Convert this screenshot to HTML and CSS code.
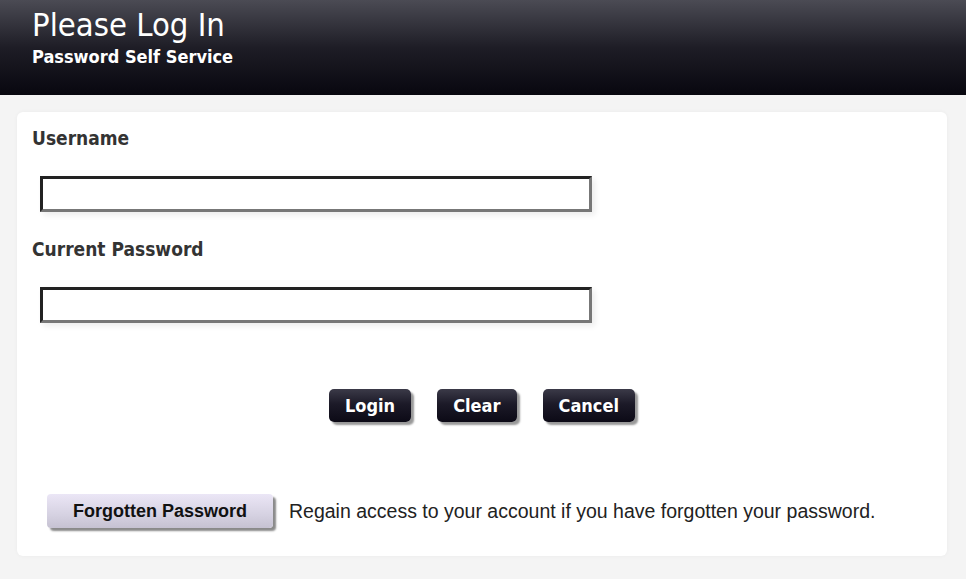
FILE: index.html
```html
<!DOCTYPE html>
<html>
<head>
<meta charset="utf-8">
<link rel="stylesheet" href="styles.css">
</head>
<body>
<header class="header">
  <h1 class="title">Please Log In</h1>
  <div class="subtitle">Password Self Service</div>
</header>
<main class="page">
  <form class="card">
    <label class="label" for="u">Username</label>
    <input class="field" id="u" type="text">
    <label class="label" for="p">Current Password</label>
    <input class="field" id="p" type="password">
    <div class="actions">
      <button type="button" class="btn">Login</button>
      <button type="button" class="btn">Clear</button>
      <button type="button" class="btn">Cancel</button>
    </div>
    <div class="forgot">
      <button type="button" class="btn-light">Forgotten Password</button>
      <span class="forgot-text">Regain access to your account if you have forgotten your password.</span>
    </div>
  </form>
</main>
</body>
</html>
```
FILE: styles.css
```css
html, body {
  margin: 0;
  padding: 0;
  background: #f4f4f4;
  height: 100%;
}
body {
  font-family: "DejaVu Sans Condensed", "DejaVu Sans", sans-serif;
  color: #333;
}
.header {
  height: 95px;
  box-sizing: border-box;
  padding: 5px 32px 0;
  background: linear-gradient(to bottom, #4b4b54 0%, #1e1d26 50%, #08070f 100%);
  color: #fff;
}
.title {
  margin: 0;
  font-size: 32.5px;
  font-weight: normal;
  line-height: 40px;
}
.subtitle {
  font-size: 18px;
  font-weight: bold;
  line-height: 24px;
}
.page {
  padding: 17px 19px 0 17px;
}
.card {
  display: flex;
  flex-direction: column;
  background: #fff;
  border-radius: 6px;
  box-shadow: 0 0 4px rgba(0,0,0,0.04);
  height: 444px;
  box-sizing: border-box;
  padding: 14px 15px 0 15px;
}
.label {
  font-size: 19px;
  font-weight: bold;
  color: #333;
  line-height: 24px;
  height: 24px;
}
.field {
  margin: 26px 0 25px 8px;
  width: 552px;
  height: 36px;
  box-sizing: border-box;
  border: 3px solid;
  border-color: #222 #777 #777 #222;
  box-shadow: 3px 3px 6px rgba(0,0,0,0.08);
  outline: none;
  background: #fff;
}
.actions {
  display: flex;
  justify-content: center;
  gap: 26px;
  margin-top: 41px;
}
.btn {
  font-family: "DejaVu Sans Condensed", "DejaVu Sans", sans-serif;
  font-size: 18px;
  font-weight: bold;
  color: #fff;
  height: 33px;
  padding: 0 16px;
  border: none;
  border-radius: 5px;
  background: linear-gradient(to bottom, #3b3a48 0%, #1c1a28 45%, #0c0a16 100%);
  box-shadow: 3px 3px 2px #999;
}
.forgot {
  display: flex;
  align-items: center;
  gap: 16px;
  margin-top: 72px;
  padding-left: 15px;
}
.btn-light {
  font-family: "Liberation Sans", Arial, sans-serif;
  font-size: 18px;
  font-weight: bold;
  color: #111;
  width: 226px;
  height: 34px;
  border: none;
  border-radius: 4px;
  background: linear-gradient(to bottom, #ebe6f6 0%, #d6d2e2 60%, #c6c2d2 100%);
  box-shadow: 3px 3px 2px #8a8a8a;
}
.forgot-text {
  font-family: "Liberation Sans", Arial, sans-serif;
  font-size: 19.5px;
  color: #222;
}
```
